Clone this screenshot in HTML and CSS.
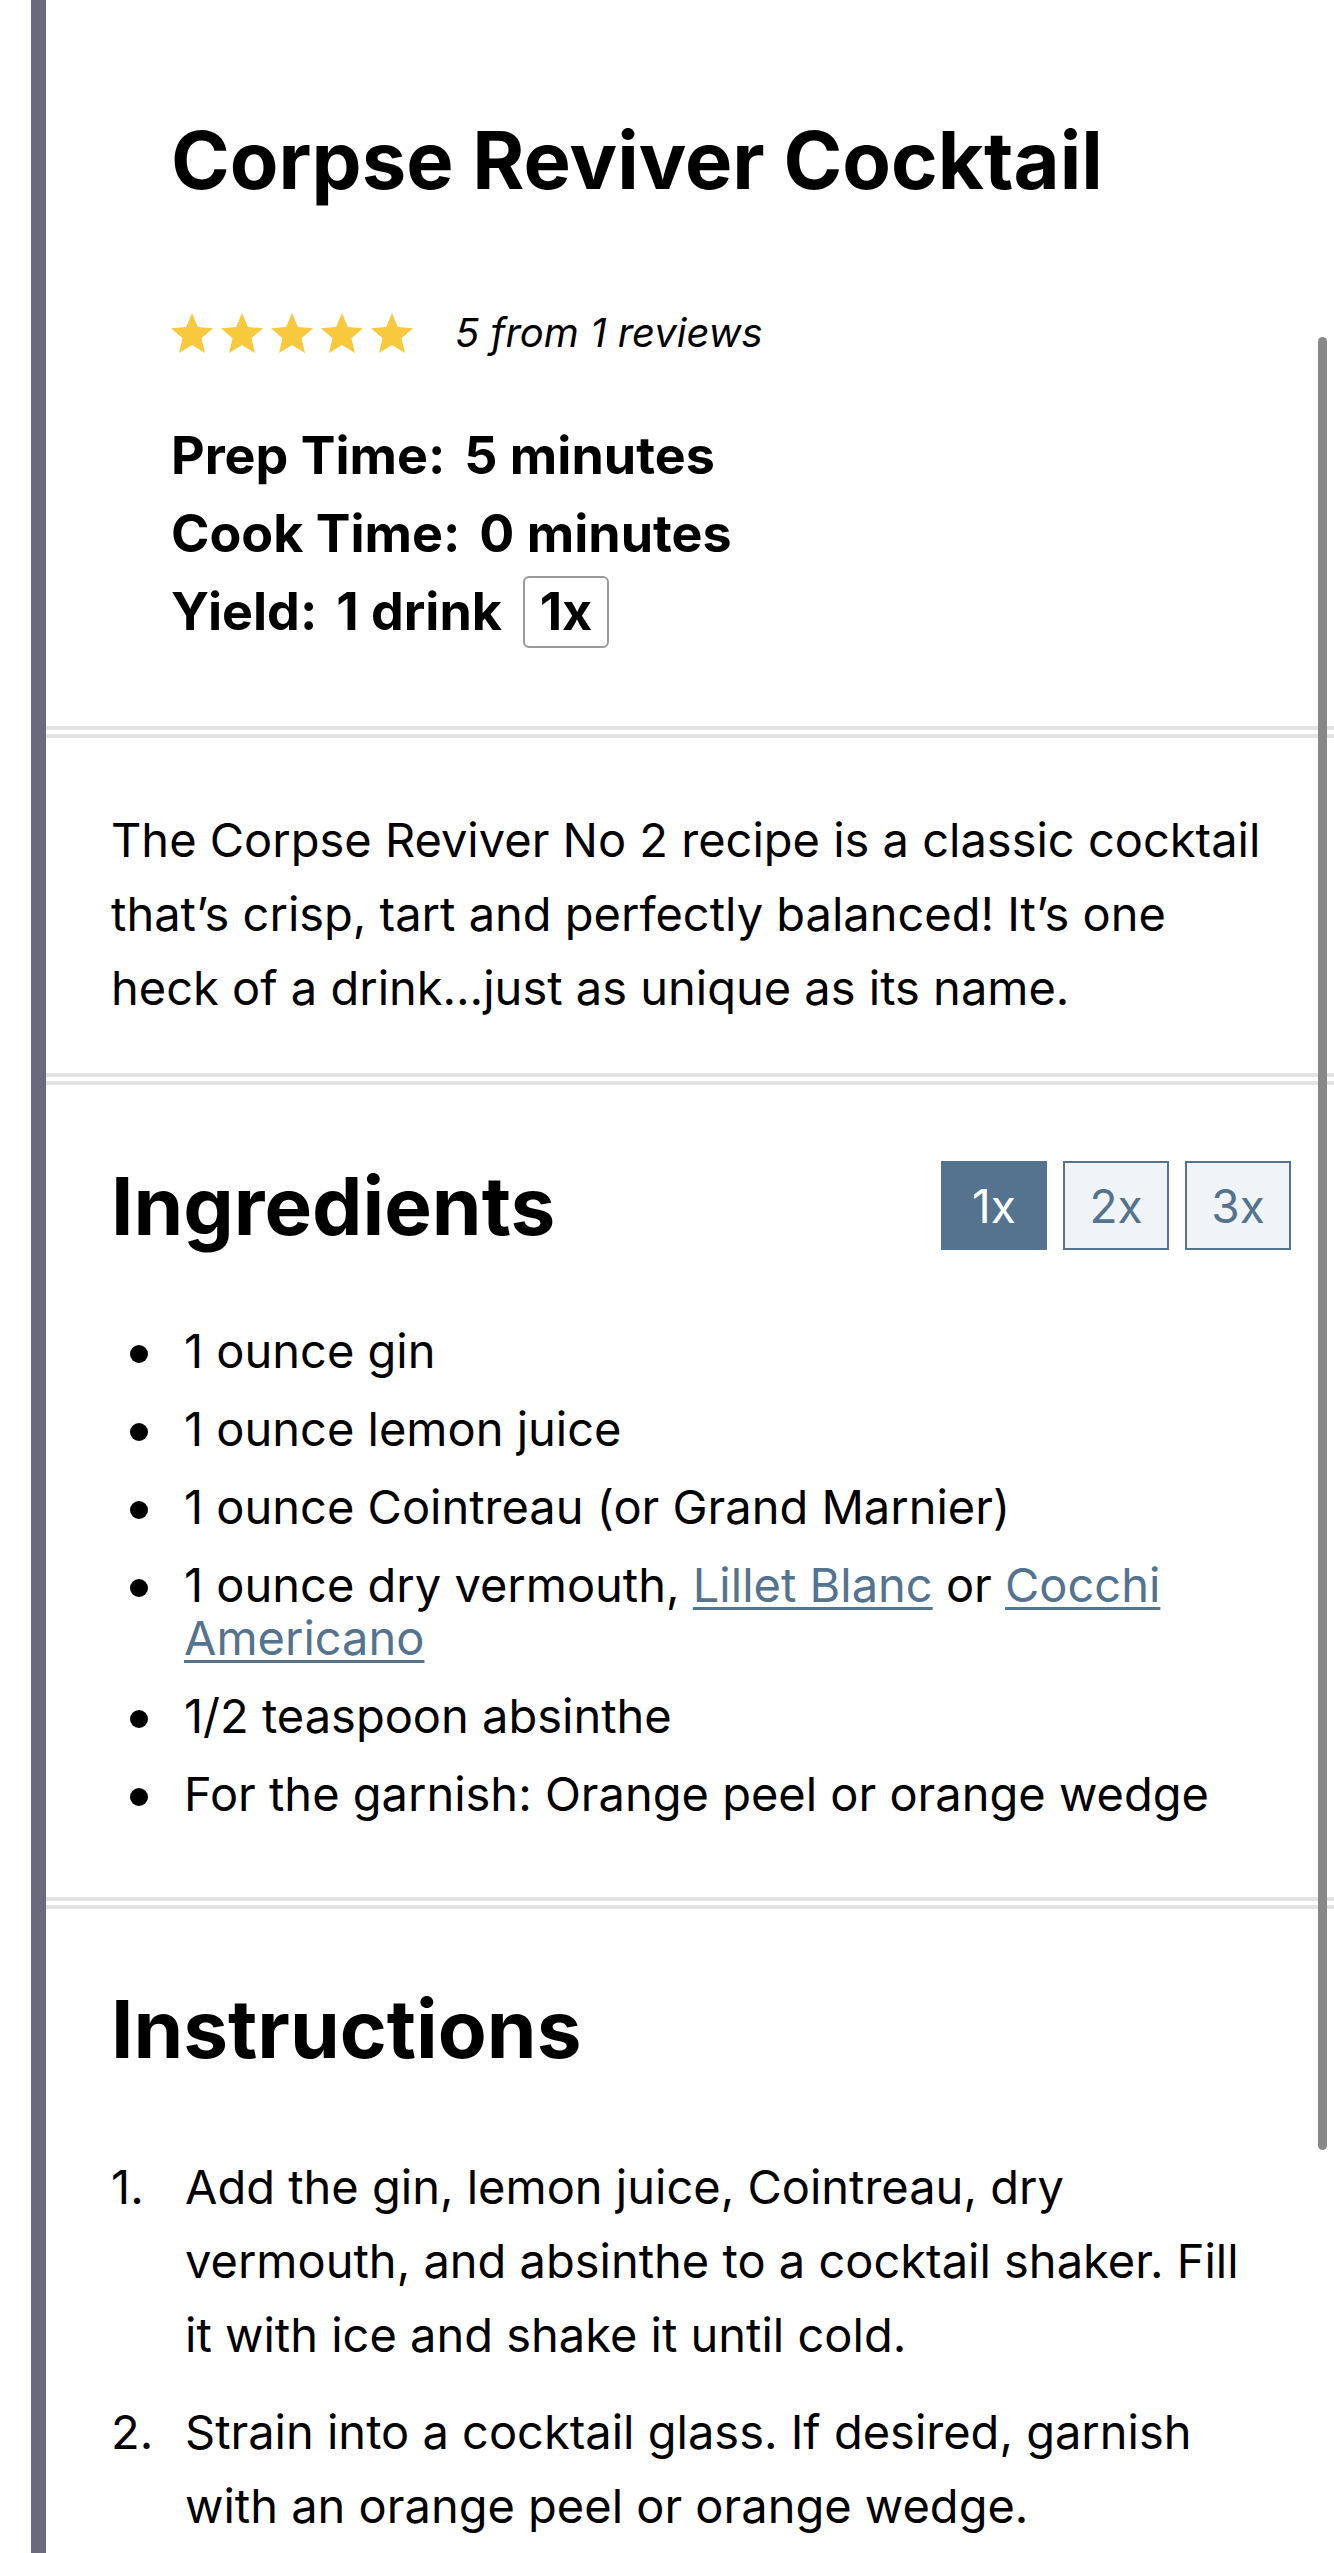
FILE: index.html
```html
<!DOCTYPE html>
<html lang="en">
<head>
<meta charset="utf-8">
<title>Corpse Reviver Cocktail</title>
<link rel="stylesheet" href="styles.css">
</head>
<body>
<div class="scrollbar"></div>
<main class="recipe">
  <section class="head">
    <h1 class="title">Corpse Reviver Cocktail</h1>
    <div class="rating">
      <div class="stars">
        <svg class="star" viewBox="2 2 20 19"><path d="M12 17.27L18.18 21l-1.64-7.03L22 9.24l-7.19-.61L12 2 9.19 8.63 2 9.24l5.46 4.73L5.82 21z"/></svg>
        <svg class="star" viewBox="2 2 20 19"><path d="M12 17.27L18.18 21l-1.64-7.03L22 9.24l-7.19-.61L12 2 9.19 8.63 2 9.24l5.46 4.73L5.82 21z"/></svg>
        <svg class="star" viewBox="2 2 20 19"><path d="M12 17.27L18.18 21l-1.64-7.03L22 9.24l-7.19-.61L12 2 9.19 8.63 2 9.24l5.46 4.73L5.82 21z"/></svg>
        <svg class="star" viewBox="2 2 20 19"><path d="M12 17.27L18.18 21l-1.64-7.03L22 9.24l-7.19-.61L12 2 9.19 8.63 2 9.24l5.46 4.73L5.82 21z"/></svg>
        <svg class="star" viewBox="2 2 20 19"><path d="M12 17.27L18.18 21l-1.64-7.03L22 9.24l-7.19-.61L12 2 9.19 8.63 2 9.24l5.46 4.73L5.82 21z"/></svg>
      </div>
      <span class="rating-text">5 from 1 reviews</span>
    </div>
    <div class="meta">
      <div class="meta-row"><span class="meta-label">Prep Time:</span><span>5 minutes</span></div>
      <div class="meta-row"><span class="meta-label">Cook Time:</span><span>0 minutes</span></div>
      <div class="meta-row"><span class="meta-label">Yield:</span><span>1 drink</span><span class="yield-box">1x</span></div>
    </div>
  </section>
  <div class="divider"></div>
  <section class="summary">
    <p>The Corpse Reviver No 2 recipe is a classic cocktail that’s crisp, tart and perfectly balanced! It’s one heck of a drink…just as unique as its name.</p>
  </section>
  <div class="divider"></div>
  <section class="ingredients">
    <div class="section-head">
      <h2 class="section-title">Ingredients</h2>
      <div class="scale">
        <button class="scale-btn active">1x</button>
        <button class="scale-btn">2x</button>
        <button class="scale-btn">3x</button>
      </div>
    </div>
    <ul class="ing-list">
      <li><span>1 ounce gin</span></li>
      <li><span>1 ounce lemon juice</span></li>
      <li><span>1 ounce Cointreau (or Grand Marnier)</span></li>
      <li><span>1 ounce dry vermouth, <a href="#">Lillet Blanc</a> or <a href="#">Cocchi Americano</a></span></li>
      <li><span>1/2 teaspoon absinthe</span></li>
      <li><span>For the garnish: Orange peel or orange wedge</span></li>
    </ul>
  </section>
  <div class="divider"></div>
  <section class="instructions">
    <h2 class="section-title">Instructions</h2>
    <ol class="steps">
      <li><span>Add the gin, lemon juice, Cointreau, dry vermouth, and absinthe to a cocktail shaker. Fill it with ice and shake it until cold.</span></li>
      <li><span>Strain into a cocktail glass. If desired, garnish with an orange peel or orange wedge.</span></li>
    </ol>
  </section>
</main>
</body>
</html>
```
FILE: styles.css
```css
html, body {
  margin: 0;
  padding: 0;
  background: #fff;
}
body {
  font-family: Inter, "Noto Sans", "Liberation Sans", sans-serif;
  color: #000;
  overflow: hidden;
}
.scrollbar {
  position: absolute;
  left: 1318px;
  top: 337px;
  width: 9px;
  height: 1813px;
  border-radius: 5px;
  background: #888888;
}
.recipe {
  margin-left: 31px;
  border-left: 15px solid #6b6a7d;
  min-height: 2553px;
  box-sizing: border-box;
}
.head {
  padding: 112px 43px 75px 125px;
}
.title {
  margin: 0;
  font-size: 79.5px;
  line-height: 96px;
  font-weight: 700;
}
.rating {
  display: flex;
  align-items: center;
  height: 39px;
  margin-top: 105px;
}
.stars {
  display: flex;
  gap: 8px;
}
.star {
  display: block;
  width: 42px;
  height: 40px;
  fill: #f8c93c;
}
.rating-text {
  margin-left: 42px;
  font-size: 40px;
  line-height: 40px;
  font-style: italic;
}
.meta {
  margin-top: 65px;
  font-size: 52px;
  line-height: 78px;
  font-weight: 700;
}
.meta-row {
  display: flex;
  align-items: baseline;
}
.meta-label {
  margin-right: 19px;
}
.yield-box {
  margin-left: 21px;
  width: 86px;
  box-sizing: border-box;
  border: 2.5px solid #9a9a9a;
  border-radius: 6px;
  text-align: center;
  line-height: 52px;
  padding: 8px 0;
}
.divider {
  height: 4px;
  border-top: 4px solid #e3e3e3;
  border-bottom: 4px solid #e3e3e3;
}
.summary {
  padding: 65px 68px 48px 65px;
}
.summary p {
  margin: 0;
  font-size: 47px;
  line-height: 74px;
}
.ingredients {
  padding: 76px 43px 77px 65px;
}
.section-head {
  display: flex;
  justify-content: space-between;
  align-items: center;
  height: 89px;
}
.section-title {
  margin: 0;
  font-size: 80px;
  line-height: 89px;
  font-weight: 700;
}
.scale {
  display: flex;
  gap: 16px;
}
.scale-btn {
  width: 106px;
  height: 89px;
  box-sizing: border-box;
  border: 2.5px solid #53738f;
  border-radius: 0;
  background: #f1f4f7;
  color: #53738f;
  font-family: Inter, "Noto Sans", sans-serif;
  font-size: 46px;
  font-weight: 400;
  line-height: 1;
  padding: 0;
}
.scale-btn.active {
  background: #53738f;
  color: #fff;
}
.ing-list {
  list-style: none;
  margin: 74px 0 0;
  padding: 0;
  font-size: 47px;
  line-height: 53px;
}
.ing-list li {
  display: flex;
  margin-bottom: 25px;
}
.ing-list li:last-child {
  margin-bottom: 0;
}
.ing-list li::before {
  content: "";
  flex: none;
  width: 18px;
  height: 18px;
  border-radius: 50%;
  background: #000;
  margin: 21px 36px 0 19px;
}
.ing-list a {
  color: #53738f;
  text-decoration: underline;
  text-decoration-thickness: 3px;
  text-underline-offset: 5px;
}
.instructions {
  padding: 75px 68px 0 65px;
}
.steps {
  list-style: none;
  counter-reset: step;
  margin: 77px 0 0;
  padding: 0;
  font-size: 47px;
  line-height: 74px;
}
.steps li {
  display: flex;
  counter-increment: step;
  margin-bottom: 23px;
}
.steps li::before {
  content: counter(step) ".";
  flex: none;
  width: 74px;
  padding-left: 0;
  box-sizing: border-box;
}
```
